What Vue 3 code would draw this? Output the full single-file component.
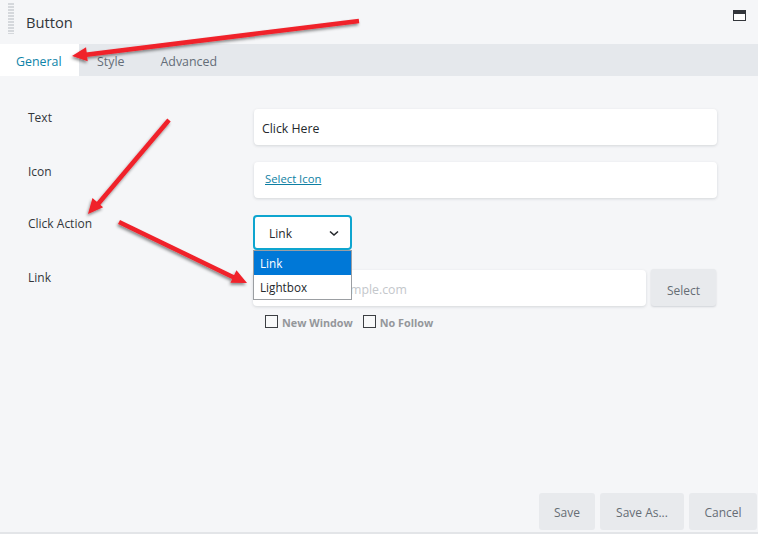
<script setup>
const tabs = ['General', 'Style', 'Advanced']
const arrows = [
  { x1: 359, y1: 21, x2: 84, y2: 55, hx: 72, hy: 56 },
  { x1: 169, y1: 120, x2: 98, y2: 204, hx: 88, hy: 214 },
  { x1: 119, y1: 222, x2: 235, y2: 278, hx: 247, hy: 283 }
]
function head(a) {
  const dx = a.hx - a.x1, dy = a.hy - a.y1
  const l = Math.hypot(dx, dy), ux = dx / l, uy = dy / l
  const bx = a.hx - ux * 15, by = a.hy - uy * 15
  return `${a.hx},${a.hy} ${bx - uy * 7},${by + ux * 7} ${bx + uy * 7},${by - ux * 7}`
}
</script>

<template>
  <div class="panel">
    <header class="head">
      <span class="grip"></span>
      <h1 class="title">Button</h1>
      <svg class="win" width="14" height="12" viewBox="0 0 14 12">
        <rect x="0.5" y="0.5" width="12" height="10" fill="#fff" stroke="#33363b" />
        <rect x="0" y="0" width="13" height="4" fill="#33363b" />
      </svg>
    </header>

    <nav class="tabs">
      <a v-for="(t, i) in tabs" :key="t" class="tab" :class="{ on: i === 0 }">{{ t }}</a>
    </nav>

    <main class="form">
      <div class="row r1">
        <label class="lab">Text</label>
        <div class="box text">Click Here</div>
      </div>
      <div class="row r2">
        <label class="lab">Icon</label>
        <div class="box icon"><a class="lnk">Select Icon</a></div>
      </div>
      <div class="row r3">
        <label class="lab">Click Action</label>
        <div class="selwrap">
          <div class="sel">
            <span>Link</span>
            <svg width="10" height="7" viewBox="0 0 10 7"><path d="M1 1.500 5 5l4-3.500" fill="none" stroke="#24272b" stroke-width="1.600" /></svg>
          </div>
          <ul class="menu">
            <li class="opt act">Link</li>
            <li class="opt">Lightbox</li>
          </ul>
        </div>
      </div>
      <div class="row r4">
        <label class="lab">Link</label>
        <div class="col">
          <div class="linkline">
            <div class="box url">http://www.example.com</div>
            <button class="selbtn">Select</button>
          </div>
          <div class="checks">
            <label class="chk"><i class="cb"></i>New Window</label>
            <label class="chk"><i class="cb"></i>No Follow</label>
          </div>
        </div>
      </div>
    </main>

    <footer class="foot">
      <button class="fbtn save">Save</button>
      <button class="fbtn saveas">Save As...</button>
      <button class="fbtn cancel">Cancel</button>
    </footer>

    <svg class="arrows" width="758" height="534" viewBox="0 0 758 534">
      <defs>
        <filter id="sh" x="-20%" y="-20%" width="140%" height="140%">
          <feDropShadow dx="-1" dy="2" stdDeviation="1.500" flood-color="#000" flood-opacity=".45" />
        </filter>
      </defs>
      <g v-for="a in arrows" :key="a.x1" filter="url(#sh)">
        <line :x1="a.x1" :y1="a.y1" :x2="a.x2" :y2="a.y2" stroke="#f0202a" stroke-width="4.500" />
        <polygon :points="head(a)" fill="#f0202a" />
      </g>
    </svg>
  </div>
</template>

<style>
html, body { margin: 0; background: #f5f6f8; }
</style>

<style scoped>
.panel {
  position: relative;
  width: 758px;
  height: 534px;
  overflow: hidden;
  background: #f5f6f8;
  font-family: "Open Sans", "Noto Sans", sans-serif;
  color: #33363b;
  display: flex;
  flex-direction: column;
  box-sizing: border-box;
  border-bottom: 2px solid #e3e5e8;
}
.head {
  height: 44px;
  flex: none;
  display: flex;
  align-items: center;
  box-sizing: border-box;
  padding: 0 11px 0 8px;
}
.grip {
  width: 6px;
  height: 31px;
  margin-top: -8px;
  background: repeating-linear-gradient(#d5d8dc 0 2px, transparent 2px 3px);
}
.title {
  margin: 0 0 0 12px;
  font-size: 14.700px;
  font-weight: 400;
  flex: 1;
}
.win { margin-top: -13px; }
.tabs {
  height: 32px;
  flex: none;
  background: #e5e8ec;
  display: flex;
  font-size: 12.400px;
  color: #646d78;
}
.tab {
  line-height: 35px;
}
.tab.on {
  width: 79px;
  box-sizing: border-box;
  background: #fff;
  color: #0e83a8;
  padding-left: 16px;
}
.tab:nth-child(2) { margin-left: 18px; }
.tab:nth-child(3) { margin-left: 36px; }
.form {
  flex: 1;
  padding: 33px 41px 0 28px;
  display: flex;
  flex-direction: column;
}
.row { display: flex; }
.lab {
  width: 225px;
  flex: none;
  font-size: 12px;
  line-height: 16px;
  margin-top: 1px;
}
.r2 { margin-top: 17px; }
.r2 .lab { margin-top: 2px; }
.r3 { margin-top: 17px; }
.r4 { margin-top: 20px; }
.r4 .lab { margin-top: 0; }
.box {
  flex: 1;
  height: 36px;
  box-sizing: border-box;
  background: #fff;
  border-radius: 4px;
  box-shadow: 0 1px 3px rgba(60, 70, 85, .18);
  display: flex;
  align-items: center;
  padding: 0 9px;
  font-size: 12.300px;
}
.text { color: #25282c; padding-top: 2px; margin-left: 1px; padding-left: 8px; }
.icon { padding: 0 11px 4px; margin-left: 1px; }
.lnk {
  color: #0e7fa3;
  font-size: 11.300px;
  text-decoration: underline;
}
.selwrap { position: relative; }
.sel {
  width: 99px;
  height: 35px;
  box-sizing: border-box;
  border: 2px solid #0ea5cf;
  border-radius: 4px;
  background: #fff;
  display: flex;
  align-items: center;
  justify-content: space-between;
  padding: 2px 11px 0 14px;
  font-size: 12px;
  color: #25282c;
}
.menu {
  position: absolute;
  z-index: 2;
  top: 35px;
  left: 0;
  width: 99px;
  margin: 0;
  padding: 0;
  list-style: none;
  box-sizing: border-box;
  border: 1px solid #9b9ea2;
  background: #fff;
  font-size: 11.700px;
  color: #25282c;
}
.opt {
  height: 24px;
  line-height: 25px;
  padding-left: 6px;
}
.act { background: #0078d7; color: #fff; }
.col { flex: 1; display: flex; flex-direction: column; }
.linkline { display: flex; gap: 5px; padding-right: 1px; }
.url { color: #c4c7cb; padding-left: 9px; padding-top: 2px; }
.selbtn, .fbtn {
  border: 0;
  font: inherit;
  background: #e8eaed;
  color: #666d75;
  border-radius: 3px;
  box-sizing: border-box;
  padding: 0;
}
.selbtn {
  width: 65px;
  height: 37px;
  margin-top: -1px;
  font-size: 12px;
  padding-top: 5px;
  box-shadow: 0 1px 2px rgba(60, 70, 85, .2);
}
.checks {
  display: flex;
  gap: 10px;
  margin-top: 9px;
  padding-left: 12px;
}
.chk {
  display: flex;
  align-items: center;
  font-size: 10.800px;
  font-weight: 700;
  color: #94979b;
  height: 14px;
}
.cb {
  width: 13px;
  height: 13px;
  box-sizing: border-box;
  border: 1px solid #3c3f43;
  margin-right: 4px;
  margin-top: -2px;
  background: #f8f9fa;
}
.foot {
  position: absolute;
  right: 1px;
  bottom: 2px;
  display: flex;
  gap: 5px;
}
.fbtn {
  height: 37px;
  font-size: 12px;
  padding-top: 2px;
}
.save { width: 56px; }
.saveas { width: 84px; }
.cancel { width: 68px; }
.arrows {
  position: absolute;
  left: 0;
  top: 0;
  pointer-events: none;
}
</style>
